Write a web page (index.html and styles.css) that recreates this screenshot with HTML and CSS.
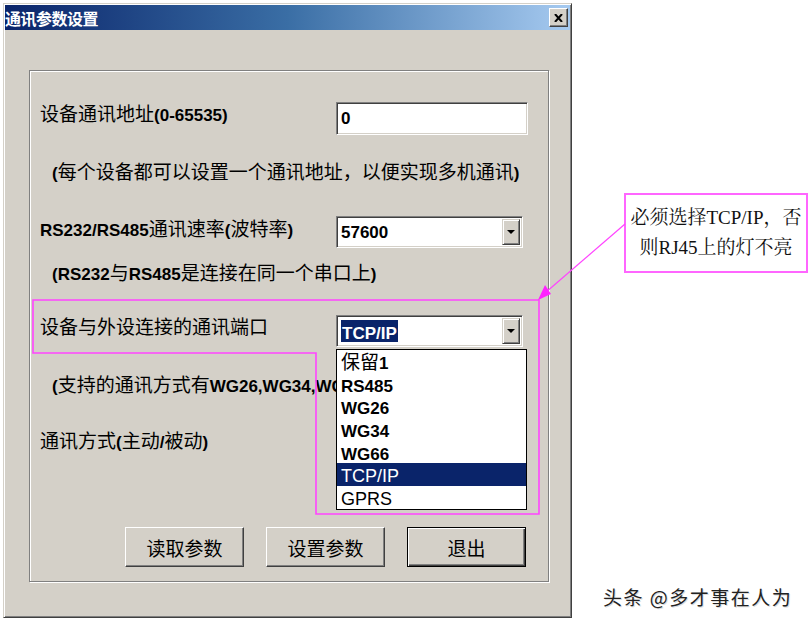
FILE: index.html
```html
<!DOCTYPE html>
<html lang="zh-CN">
<head>
<meta charset="utf-8">
<title>通讯参数设置</title>
<link rel="stylesheet" href="styles.css">
</head>
<body>
<div class="page">
  <div class="dialog">
    <div class="titlebar">
      <span class="title">通讯参数设置</span>
      <span class="close" aria-label="关闭">
        <svg width="9" height="8" viewBox="0 0 9 8"><path d="M1 0 L8 8 M8 0 L1 8" stroke="#000" stroke-width="2" fill="none"/></svg>
      </span>
    </div>
    <div class="group">
      <div class="row r1">
        <span class="label">设备通讯地址<b>(0-65535)</b></span>
        <div class="field"><b>0</b></div>
      </div>
      <div class="note n1"><b>(</b>每个设备都可以设置一个通讯地址，以便实现多机通讯<b>)</b></div>
      <div class="row r3">
        <span class="label"><b>RS232/RS485</b>通讯速率<b>(</b>波特率<b>)</b></span>
        <div class="combo">
          <span class="val"><b>57600</b></span>
          <span class="drop"><i class="arrow"></i></span>
        </div>
      </div>
      <div class="note n2"><b>(RS232</b>与<b>RS485</b>是连接在同一个串口上<b>)</b></div>
      <div class="row r5">
        <span class="label">设备与外设连接的通讯端口</span>
        <div class="combo open">
          <span class="val"><span class="sel"><b>TCP/IP</b></span></span>
          <span class="drop"><i class="arrow"></i></span>
          <ul class="list">
            <li>保留<b>1</b></li>
            <li><b>RS485</b></li>
            <li><b>WG26</b></li>
            <li><b>WG34</b></li>
            <li><b>WG66</b></li>
            <li class="on"><span class="reg">TCP/IP</span></li>
            <li><span class="reg">GPRS</span></li>
          </ul>
        </div>
      </div>
      <div class="note n3"><b>(</b>支持的通讯方式有<b>WG26,WG34,WG66,TCP/IP,GPRS)</b></div>
      <div class="row r7">
        <span class="label">通讯方式<b>(</b>主动<b>/</b>被动<b>)</b></span>
      </div>
      <div class="buttons">
        <button class="btn" type="button">读取参数</button>
        <button class="btn" type="button">设置参数</button>
        <button class="btn default" type="button">退出</button>
      </div>
    </div>
  </div>

  <svg class="marks" width="811" height="626" viewBox="0 0 811 626">
    <polygon points="33,300 539,300 539,514 316,514 316,353 33,353" fill="none" stroke="#ff44ff" stroke-width="1.6"/>
    <line x1="625" y1="224" x2="545" y2="293" stroke="#ff44ff" stroke-width="1.2"/>
    <polygon points="538,300 551,294 545,285" fill="#ff22ff"/>
  </svg>

  <div class="callout">必须选择TCP/IP，否<br>则RJ45上的灯不亮</div>

  <div class="watermark">头条 @多才事在人为</div>
</div>
</body>
</html>
```

FILE: styles.css
```css
* { box-sizing: border-box; }

html, body {
  margin: 0;
  padding: 0;
  background: #fff;
}

body {
  font-family: "Noto Sans CJK SC", sans-serif;
  font-size: 19px;
  color: #000;
}

b {
  font-family: "Liberation Sans", "Noto Sans CJK SC", sans-serif;
  font-size: 17px;
  font-weight: bold;
  line-height: 1;
}

.reg {
  font-family: "Liberation Sans", sans-serif;
  font-size: 18px;
  line-height: 1;
}

.page {
  position: relative;
  width: 811px;
  height: 626px;
  overflow: hidden;
  padding: 3px 0 0 3px;
}

.dialog {
  width: 569px;
  height: 615px;
  background: #d4d0c8;
  border: 1px solid;
  border-color: #d4d0c8 #404040 #404040 #d4d0c8;
  box-shadow: inset 1px 1px 0 #fff, inset -1px -1px 0 #808080;
  padding: 1px;
}

.titlebar {
  height: 25px;
  background: linear-gradient(to right, #0a246a 0%, #3a6ea5 50%, #a6caf0 100%);
  display: flex;
  align-items: center;
  justify-content: space-between;
  padding: 0 2px 0 0;
}

.title {
  color: #fff;
  font-weight: bold;
  font-size: 16px;
  line-height: 1;
  letter-spacing: -0.5px;
}

.close {
  width: 19px;
  height: 19px;
  background: #d4d0c8;
  border: 1px solid;
  border-color: #fff #404040 #404040 #fff;
  box-shadow: inset -1px -1px 0 #808080;
  display: flex;
  align-items: center;
  justify-content: center;
}

.group {
  margin: 40px 0 0 24px;
  width: 520px;
  border: 1px solid #808080;
  box-shadow: 1px 1px 0 #fff, inset 1px 1px 0 #fff;
  padding: 31px 0 14px 10px;
}

.row {
  display: flex;
  align-items: flex-start;
}

.label {
  width: 296px;
  height: 22px;
  flex: none;
  line-height: 22px;
  white-space: nowrap;
}

.r3 .label { margin-top: 1px; }

.note {
  height: 22px;
  line-height: 22px;
  padding-left: 12px;
  white-space: nowrap;
}

.n1 { margin-top: 25px; }
.r3 { margin-top: 34px; }
.n2 { margin-top: 13px; }
.r5 { margin-top: 32px; }
.n3 { margin-top: 26px; width: 296px; overflow: hidden; }
.r7 { margin-top: 34px; }

.field {
  width: 192px;
  height: 33px;
  background: #fff;
  border: 1px solid;
  border-color: #808080 #fff #fff #808080;
  box-shadow: inset 1px 1px 0 #404040, inset -1px -1px 0 #d4d0c8;
  padding: 0 4px;
  display: flex;
  align-items: center;
}

.combo {
  position: relative;
  width: 187px;
  height: 32px;
  background: #fff;
  border: 1px solid;
  border-color: #808080 #fff #fff #808080;
  box-shadow: inset 1px 1px 0 #404040, inset -1px -1px 0 #d4d0c8;
  padding: 2px;
  display: flex;
}

.val {
  flex: 1;
  display: flex;
  align-items: center;
  padding-left: 2px;
}

.sel {
  background: #0a246a;
  color: #fff;
  line-height: 22px;
  height: 22px;
  padding: 0 1px;
}

.drop {
  width: 18px;
  background: #d4d0c8;
  border: 1px solid;
  border-color: #d4d0c8 #404040 #404040 #d4d0c8;
  box-shadow: inset 1px 1px 0 #fff, inset -1px -1px 0 #808080;
  display: flex;
  align-items: center;
  justify-content: center;
}

.arrow {
  width: 0;
  height: 0;
  border-top: 4px solid #000;
  border-left: 4px solid transparent;
  border-right: 4px solid transparent;
}

.list {
  position: absolute;
  left: -1px;
  top: 33px;
  width: 191px;
  margin: 0;
  padding: 0;
  list-style: none;
  background: #fff;
  border: 1px solid #000;
  z-index: 2;
}

.list li {
  height: 22.7px;
  line-height: 22.7px;
  padding-left: 4px;
  white-space: nowrap;
}

.list li.on {
  background: #0a246a;
  color: #fff;
}

.buttons {
  margin-top: 76px;
  display: flex;
  justify-content: flex-end;
  gap: 22px;
  padding-right: 22px;
}

.btn {
  width: 119px;
  height: 40px;
  font-family: "Noto Sans CJK SC", sans-serif;
  font-size: 19px;
  color: #000;
  background: #d4d0c8;
  border: 1px solid;
  border-color: #fff #404040 #404040 #fff;
  box-shadow: inset -1px -1px 0 #808080, inset 1px 1px 0 #d4d0c8;
  padding: 0;
}

.btn.default {
  border: 1px solid #000;
  box-shadow: inset 1px 1px 0 #fff, inset -1px -1px 0 #404040, inset -2px -2px 0 #808080;
}

.marks {
  position: absolute;
  left: 0;
  top: 0;
  pointer-events: none;
  z-index: 3;
}

.callout {
  position: absolute;
  left: 624px;
  top: 193px;
  width: 184px;
  height: 80px;
  border: 2px solid #ff66ff;
  background: #fff;
  font-family: "Liberation Serif", "Noto Serif CJK SC", "Noto Sans CJK SC", serif;
  font-size: 19px;
  line-height: 30px;
  text-align: center;
  padding-top: 8px;
  color: #111;
}

.watermark {
  position: absolute;
  left: 603px;
  top: 583px;
  font-size: 19px;
  letter-spacing: 1.5px;
  color: #222;
  text-shadow: 1px 1px 0 #ddd;
  white-space: nowrap;
}
```
